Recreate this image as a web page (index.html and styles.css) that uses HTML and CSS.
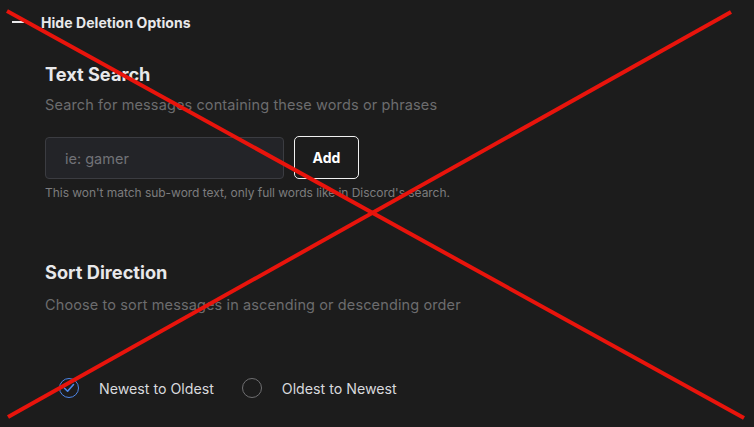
FILE: index.html
```html
<!DOCTYPE html>
<html>
<head>
<meta charset="utf-8">
<link rel="stylesheet" href="styles.css">
</head>
<body>
<div class="page">
  <div class="toggle">
    <span class="minus"></span>
    <span class="toggle-label">Hide Deletion Options</span>
  </div>
  <div class="content">
    <section class="section">
      <h2 class="title">Text Search</h2>
      <p class="desc">Search for messages containing these words or phrases</p>
      <div class="input-row">
        <div class="input"><span class="placeholder">ie: gamer</span></div>
        <button class="btn">Add</button>
      </div>
      <p class="hint">This won't match sub-word text, only full words like in Discord's search.</p>
    </section>
    <section class="section sort">
      <h2 class="title">Sort Direction</h2>
      <p class="desc">Choose to sort messages in ascending or descending order</p>
      <div class="radios">
        <label class="radio">
          <span class="circle checked">
            <svg width="12" height="10" viewBox="0 0 12 10"><path d="M1.5 5.2 L4.6 8.2 L10.5 1.5" fill="none" stroke="#4e86e8" stroke-width="1.6" stroke-linecap="round" stroke-linejoin="round"/></svg>
          </span>
          <span class="radio-label">Newest to Oldest</span>
        </label>
        <label class="radio">
          <span class="circle"></span>
          <span class="radio-label">Oldest to Newest</span>
        </label>
      </div>
    </section>
  </div>
  <svg class="cross" width="754" height="427" viewBox="0 0 754 427">
    <line x1="7" y1="11" x2="744" y2="418" stroke="#e8140c" stroke-width="4"/>
    <line x1="731" y1="12" x2="8" y2="417" stroke="#e8140c" stroke-width="4"/>
  </svg>
</div>
</body>
</html>
```
FILE: styles.css
```css
html, body {
  margin: 0;
  padding: 0;
  background: #1c1c1c;
}
body {
  font-family: Inter, "Noto Sans", sans-serif;
  color: #e8e8ea;
}
.page {
  position: relative;
  width: 754px;
  height: 427px;
  overflow: hidden;
}
.toggle {
  display: flex;
  align-items: center;
  height: 20px;
  padding: 12px 0 0 12px;
}
.minus {
  width: 12px;
  height: 2px;
  background: #e8e8ea;
  margin-right: 17px;
}
.toggle-label {
  font-size: 14px;
  font-weight: 700;
  letter-spacing: 0.05px;
}
.content {
  padding-left: 45px;
}
.section {
  margin: 0;
}
.title {
  margin: 30px 0 0 0;
  font-size: 18.2px;
  font-weight: 700;
  line-height: 24px;
  color: #e8e8ea;
}
.desc {
  margin: 9px 0 0 0;
  font-size: 14.5px;
  line-height: 20px;
  letter-spacing: 0.12px;
  color: #6c6c6e;
}
.input-row {
  display: flex;
  gap: 10px;
  margin-top: 22px;
}
.input {
  width: 239px;
  height: 42px;
  box-sizing: border-box;
  background: #232428;
  border: 1px solid #3b3c41;
  border-radius: 4px;
  display: flex;
  align-items: center;
  padding-left: 19px;
}
.placeholder {
  font-size: 14.5px;
  color: #717277;
}
.btn {
  width: 65px;
  height: 43px;
  margin-top: -1px;
  box-sizing: border-box;
  background: #1c1c1c;
  border: 1px solid #f0f0f0;
  border-radius: 5px;
  color: #ffffff;
  font-family: inherit;
  font-size: 14px;
  font-weight: 700;
  padding: 0;
}
.hint {
  margin: 6px 0 0 0;
  font-size: 12px;
  line-height: 16px;
  letter-spacing: -0.04px;
  color: #7c7c7e;
}
.sort .title {
  margin-top: 59px;
}
.sort .desc {
  margin-top: 11px;
}
.radios {
  display: flex;
  align-items: center;
  margin-top: 63px;
  padding-left: 14px;
  gap: 28px;
}
.radio {
  display: flex;
  align-items: center;
}
.circle {
  width: 18px;
  height: 18px;
  border-radius: 50%;
  border: 1.5px solid #6f6f71;
  display: flex;
  align-items: center;
  justify-content: center;
  margin-right: 20px;
}
.circle.checked {
  border-color: #4e86e8;
}
.radio-label {
  font-size: 14.2px;
  color: #d8d9dd;
}
.cross {
  position: absolute;
  left: 0;
  top: 0;
  pointer-events: none;
}
```
